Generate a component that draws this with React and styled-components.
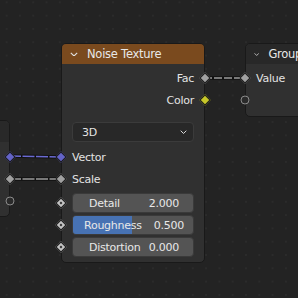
import React from 'react'
import styled, { createGlobalStyle } from 'styled-components'

const GlobalStyle = createGlobalStyle`
  html, body {
    margin: 0;
    padding: 0;
    background: #232323;
  }
`

const SOCKET = {
    grey: '#a1a1a1',
    yellow: '#c7c729',
    blue: '#6363c7',
}

const Styled = {
    Canvas: styled.div`
      position: relative;
      width: 298px;
      height: 298px;
      overflow: hidden;
      background-color: #232323;
      background-image: radial-gradient(circle, #2b2b2b 0.9px, transparent 1.3px);
      background-size: 13.3px 13.3px;
      background-position: 0px 9px;
      font-family: "DejaVu Sans", "Liberation Sans", sans-serif;
      font-size: 11px;
      letter-spacing: -0.25px;
      color: #e3e3e3;
    `,
    Links: styled.svg`
      position: absolute;
      left: 0;
      top: 0;
    `,
    Node: styled.div`
      position: absolute;
      left: ${props => props.left}px;
      top: ${props => props.top}px;
      width: ${props => props.width}px;
      height: ${props => props.height}px;
      box-sizing: border-box;
      display: flex;
      flex-direction: column;
      background: #303030;
      border: 1px solid #191919;
      border-radius: 5px;
    `,
    Header: styled.div`
      display: flex;
      align-items: center;
      gap: 9px;
      height: ${props => props.height || 20}px;
      padding-left: 8px;
      flex-shrink: 0;
      background: ${props => props.bg};
      border-radius: 4px 4px 0 0;
      font-size: 11.5px;
      color: #e8e8e8;
      white-space: nowrap;
    `,
    Body: styled.div`
      display: flex;
      flex-direction: column;
      padding: ${props => props.pad};
    `,
    Row: styled.div`
      position: relative;
      display: flex;
      align-items: center;
      justify-content: ${props => (props.out ? 'flex-end' : 'flex-start')};
      height: 22px;
      padding: 0 10px 0 10px;
      white-space: nowrap;
    `,
    Socket: styled.span`
      position: absolute;
      top: 50%;
      ${props => (props.out ? 'right' : 'left')}: -1px;
      width: 6px;
      height: 6px;
      background: ${props => props.color};
      border: 1px solid #1a1a1a;
      transform: translate(${props => (props.out ? '50%' : '-50%')}, -50%) rotate(45deg);
    `,
    DotSocket: styled.span`
      position: absolute;
      top: 50%;
      left: -1px;
      width: 6px;
      height: 6px;
      background: #c4c4c4;
      border: 1px solid #1a1a1a;
      transform: translate(-50%, -50%) rotate(45deg);
      &::after {
        content: '';
        position: absolute;
        left: 2px;
        top: 2px;
        width: 2px;
        height: 2px;
        background: #2a2a2a;
      }
    `,
    Ring: styled.span`
      position: absolute;
      top: 50%;
      ${props => (props.out ? 'right' : 'left')}: -1px;
      width: 7px;
      height: 7px;
      border-radius: 50%;
      border: 1.5px solid #8a8a8a;
      background: #2a2a2a;
      transform: translate(${props => (props.out ? '50%' : '-50%')}, -50%);
    `,
    Select: styled.div`
      display: flex;
      align-items: center;
      justify-content: space-between;
      height: 20px;
      margin: 11px 10px 4px 10px;
      padding: 0 6px 0 9px;
      box-sizing: border-box;
      background: #282828;
      border: 1px solid #3b3b3b;
      border-radius: 4px;
    `,
    Fields: styled.div`
      display: flex;
      flex-direction: column;
      margin-top: 2px;
    `,
    Field: styled.div`
      position: relative;
      display: flex;
      align-items: center;
      justify-content: space-between;
      flex: 1;
      height: 20px;
      box-sizing: border-box;
      padding: ${props => (props.slider ? '0 9px 0 11px' : '0 14px 0 16px')};
      background: #545454;
      border: 1px solid #3a3a3a;
      border-radius: 4px;
      overflow: hidden;
      color: #e8e8e8;
    `,
    Fill: styled.span`
      position: absolute;
      left: 0;
      top: 0;
      bottom: 0;
      background: #4772b3;
    `,
    FieldText: styled.span`
      position: relative;
    `,
}

const Chevron = ({ size = 8 }) => (
    <svg width={size} height={size * 0.6} viewBox="0 0 10 6">
        <polyline points="1,1 5,5 9,1" fill="none" stroke="#e0e0e0" strokeWidth="1.4" />
    </svg>
)

const NumberRow = ({ label, value, fill }) => (
    <Styled.Row>
        <Styled.DotSocket />
        <Styled.Field slider={fill !== undefined}>
            {fill !== undefined && <Styled.Fill style={{ width: `${fill * 100}%` }} />}
            <Styled.FieldText>{label}</Styled.FieldText>
            <Styled.FieldText>{value}</Styled.FieldText>
        </Styled.Field>
    </Styled.Row>
)

const App = () => {
    return (
        <>
            <GlobalStyle />
            <Styled.Canvas>
                <Styled.Links width="298" height="298">
                    <line x1="9" y1="156" x2="62" y2="157" stroke="#111" strokeWidth="3.5" />
                    <line x1="9" y1="156" x2="62" y2="157" stroke="#6a6ad2" strokeWidth="1.6" strokeDasharray="12 1.5" />
                    <line x1="9" y1="179" x2="62" y2="179" stroke="#111" strokeWidth="3.5" />
                    <line x1="9" y1="179" x2="62" y2="179" stroke="#9a9a9a" strokeWidth="1.6" strokeDasharray="12 1.5" />
                    <line x1="204" y1="78" x2="246" y2="78" stroke="#111" strokeWidth="3.5" />
                    <line x1="204" y1="78" x2="246" y2="78" stroke="#9a9a9a" strokeWidth="1.6" strokeDasharray="8 2" />
                </Styled.Links>

                <Styled.Node left={-100} top={120} width={110} height={97}>
                    <Styled.Header bg="#292929" height={21} />
                    <Styled.Body pad="4px 0 0 0">
                        <Styled.Row out>
                            <Styled.Socket out color={SOCKET.blue} />
                        </Styled.Row>
                        <Styled.Row out>
                            <Styled.Socket out color={SOCKET.grey} />
                        </Styled.Row>
                        <Styled.Row out>
                            <Styled.Ring out />
                        </Styled.Row>
                    </Styled.Body>
                </Styled.Node>

                <Styled.Node left={61} top={43} width={144} height={220}>
                    <Styled.Header bg="#7a4a1e">
                        <Chevron />
                        <span>Noise Texture</span>
                    </Styled.Header>
                    <Styled.Body pad="3px 0 0 0">
                        <Styled.Row out>
                            Fac
                            <Styled.Socket out color={SOCKET.grey} />
                        </Styled.Row>
                        <Styled.Row out>
                            Color
                            <Styled.Socket out color={SOCKET.yellow} />
                        </Styled.Row>
                        <Styled.Select>
                            <span>3D</span>
                            <Chevron size={7} />
                        </Styled.Select>
                        <Styled.Row>
                            <Styled.Socket color={SOCKET.blue} />
                            Vector
                        </Styled.Row>
                        <Styled.Row>
                            <Styled.Socket color={SOCKET.grey} />
                            Scale
                        </Styled.Row>
                        <Styled.Fields>
                            <NumberRow label="Detail" value="2.000" />
                            <NumberRow label="Roughness" value="0.500" fill={0.49} />
                            <NumberRow label="Distortion" value="0.000" />
                        </Styled.Fields>
                    </Styled.Body>
                </Styled.Node>

                <Styled.Node left={245} top={43} width={100} height={74}>
                    <Styled.Header bg="#282828">
                        <Chevron />
                        <span>Group Output</span>
                    </Styled.Header>
                    <Styled.Body pad="3px 0 0 0">
                        <Styled.Row>
                            <Styled.Socket color={SOCKET.grey} />
                            Value
                        </Styled.Row>
                        <Styled.Row>
                            <Styled.Ring />
                        </Styled.Row>
                    </Styled.Body>
                </Styled.Node>
            </Styled.Canvas>
        </>
    )
}

export default App
